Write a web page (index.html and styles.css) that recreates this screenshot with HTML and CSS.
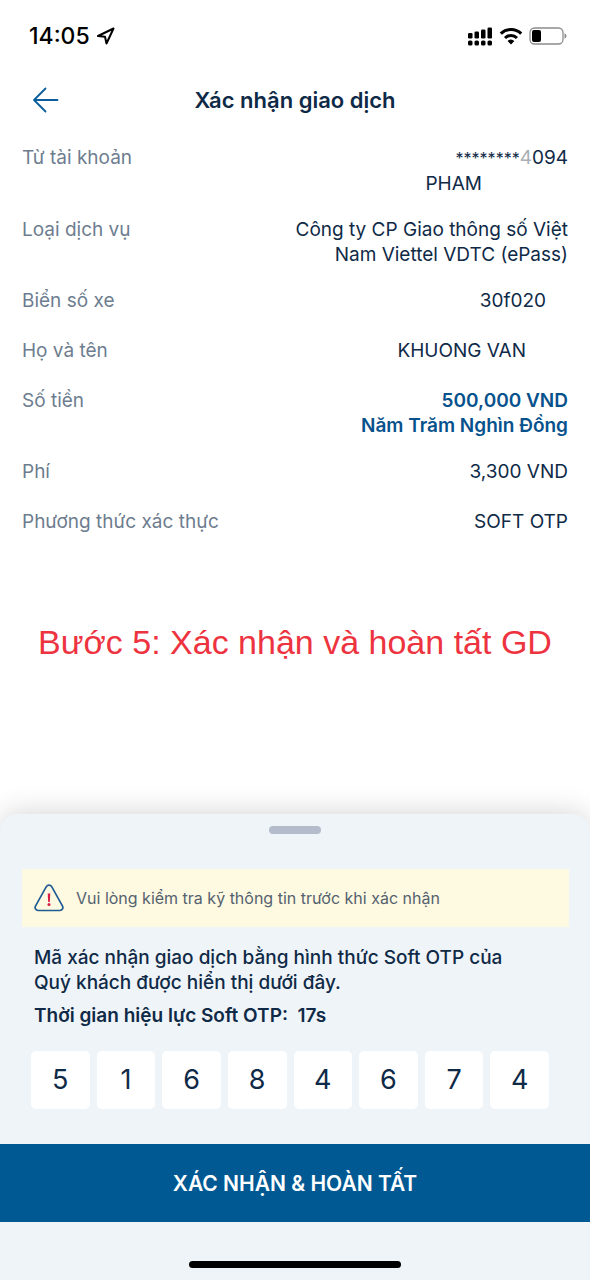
FILE: index.html
```html
<!DOCTYPE html>
<html lang="vi">
<head>
<meta charset="utf-8">
<meta name="viewport" content="width=device-width, initial-scale=1">
<title>Xác nhận giao dịch</title>
<link rel="stylesheet" href="styles.css">
</head>
<body>
<div class="screen">
  <div class="status">
    <span class="status-time">14:05</span>
    <svg class="status-location" width="20" height="20" viewBox="0 0 20 20" fill="none" stroke="#000" stroke-width="2" stroke-linejoin="round" aria-hidden="true"><path d="M17.500 2.500 2 10l7 .8 1.500 6.700z"/></svg>
    <div class="status-icons">
      <svg width="25" height="20" viewBox="0 0 25 20" aria-hidden="true"><g fill="#000"><rect x="0" y="7" width="4.500" height="5.500" rx="1.300"/><rect x="6.500" y="5.500" width="4.500" height="7" rx="1.300"/><rect x="13" y="3.500" width="4.500" height="9" rx="1.300"/><rect x="19.500" y="1.500" width="4.500" height="11" rx="1.300"/><rect x="0" y="14.500" width="4.500" height="5" rx="1.600"/><rect x="6.500" y="14.500" width="4.500" height="5" rx="1.600"/><rect x="13" y="14.500" width="4.500" height="5" rx="1.600"/><rect x="19.500" y="14.500" width="4.500" height="5" rx="1.600"/></g></svg>
      <svg width="24" height="18" viewBox="0 0 24 18" fill="none" stroke="#000" stroke-width="3" aria-hidden="true"><path d="M1.800 6.600a14.500 14.500 0 0 1 20.400 0"/><path d="M6 11a8.600 8.600 0 0 1 12 0"/><path d="M12 17.500 8.600 14a5 5 0 0 1 6.800 0z" fill="#000" stroke="none"/></svg>
      <svg width="38" height="18" viewBox="0 0 38 18" aria-hidden="true"><rect x="1" y="1" width="33" height="16" rx="4.500" fill="none" stroke="#8c8c8c" stroke-width="1.300"/><rect x="3" y="3" width="9" height="12" rx="2" fill="#000"/><path d="M35.500 6.300Q37.500 7 37.500 9T35.500 11.700z" fill="#8c8c8c"/></svg>
    </div>
  </div>

  <header class="header">
    <button class="back" type="button" aria-label="Quay lại">
      <svg width="28" height="26" viewBox="0 0 28 26" fill="none" stroke="#0b5e9b" stroke-width="1.800" stroke-linecap="round" stroke-linejoin="round" aria-hidden="true"><path d="M25.500 13H2M13.500 1.500 2 13l11.500 11.500"/></svg>
    </button>
    <h1 class="title">Xác nhận giao dịch</h1>
  </header>

  <dl class="details">
    <div class="row"><dt>Từ tài khoản</dt><dd><span class="mask">********</span><span class="faded">4</span>094<span class="line holder">PHAM</span></dd></div>
    <div class="row"><dt>Loại dịch vụ</dt><dd>Công ty CP Giao thông số Việt<br>Nam Viettel VDTC (ePass)</dd></div>
    <div class="row"><dt>Biển số xe</dt><dd class="plate">30f020</dd></div>
    <div class="row"><dt>Họ và tên</dt><dd class="owner">KHUONG VAN</dd></div>
    <div class="row"><dt>Số tiền</dt><dd class="amount">500,000 VND<span class="line">Năm Trăm Nghìn Đồng</span></dd></div>
    <div class="row"><dt>Phí</dt><dd>3,300 VND</dd></div>
    <div class="row"><dt>Phương thức xác thực</dt><dd>SOFT OTP</dd></div>
  </dl>

  <p class="step">Bước 5: Xác nhận và hoàn tất GD</p>

  <section class="sheet">
    <div class="handle"></div>
    <div class="notice">
      <svg width="30" height="28" viewBox="0 0 30 28" fill="none" aria-hidden="true"><path d="M12.300 2.600a3.200 3.200 0 0 1 5.400 0l10.700 19.200c1.200 2.200 0 4.700-2.600 4.700H4.200c-2.600 0-3.800-2.500-2.600-4.700z" stroke="#1f5c92" stroke-width="1.700"/><path d="M13.700 9.500h2.600l-.5 8.500h-1.600z" fill="#d81e48"/><circle cx="15" cy="20.500" r="1.500" fill="#d81e48"/></svg>
      <span>Vui lòng kiểm tra kỹ thông tin trước khi xác nhận</span>
    </div>
    <div class="info">
      <p>Mã xác nhận giao dịch bằng hình thức Soft OTP của<br>Quý khách được hiển thị dưới đây.</p>
      <p class="timer">Thời gian hiệu lực Soft OTP:&nbsp; 17s</p>
    </div>
    <div class="otp">
      <span>5</span><span>1</span><span>6</span><span>8</span><span>4</span><span>6</span><span>7</span><span>4</span>
    </div>
    <button class="confirm" type="button">XÁC NHẬN &amp; HOÀN TẤT</button>
    <div class="home"></div>
  </section>
</div>
</body>
</html>
```
FILE: styles.css
```css
* {
  box-sizing: border-box;
}

body {
  margin: 0;
  background: #fff;
  color: #0f2a47;
  font-family: Inter, "Open Sans", sans-serif;
  font-size: 19px;
  line-height: 25px;
}

p, h1, dl, dd {
  margin: 0;
}

button {
  border: 0;
  padding: 0;
  font-family: inherit;
  cursor: pointer;
}

.screen {
  display: flex;
  flex-direction: column;
  min-height: 100vh;
}

.status {
  display: flex;
  align-items: center;
  height: 72px;
  padding: 0 23px 0 29px;
  gap: 6px;
}

.status-time {
  color: #000;
  font-size: 23px;
  font-weight: 500;
}

.status-icons {
  display: flex;
  align-items: center;
  gap: 6px;
  margin-left: auto;
}

.header {
  display: grid;
  grid-template-columns: 28px 1fr 28px;
  align-items: center;
  height: 56px;
  padding: 0 32px;
}

.back {
  display: flex;
  background: none;
}

.title {
  font-size: 22px;
  font-weight: 600;
  text-align: center;
}

.details {
  display: flex;
  flex-direction: column;
  gap: 21px;
  padding: 17px 22px 0;
}

.row {
  display: flex;
  justify-content: space-between;
  gap: 16px;
  min-height: 29px;
}

.row dt {
  color: #6d7d8f;
}

.row dd {
  text-align: right;
}

.line {
  display: block;
}

.mask {
  font-size: 16px;
}

.faded {
  color: #a9afb6;
}

.holder {
  padding-right: 86px;
}

.row .plate {
  padding-right: 22px;
}

.row .owner {
  padding-right: 42px;
}

.row .amount {
  color: #07528d;
  font-weight: 600;
}

.step {
  margin: 80px 0 40px;
  color: #ee3340;
  font-family: "Liberation Sans", Arial, sans-serif;
  font-size: 34px;
  line-height: 48px;
  text-align: center;
}

.sheet {
  display: flex;
  flex-direction: column;
  margin-top: auto;
  padding-bottom: 12px;
  border-radius: 18px 18px 0 0;
  background: #eff4f8;
  box-shadow: 0 -2px 28px rgba(0, 0, 0, 0.16);
}

.handle {
  align-self: center;
  width: 52px;
  height: 8px;
  margin-top: 12px;
  border-radius: 4px;
  background: #b4bccb;
}

.notice {
  display: flex;
  align-items: center;
  gap: 12px;
  min-height: 58px;
  margin: 35px 21px 0 22px;
  padding: 0 12px;
  background: #fef9e1;
  color: #54626f;
  font-size: 16px;
}

.info {
  display: flex;
  flex-direction: column;
  gap: 8px;
  padding: 18px 34px 0;
  font-weight: 500;
}

.info .timer {
  font-weight: 600;
}

.otp {
  display: grid;
  grid-template-columns: repeat(8, 1fr);
  gap: 7px;
  margin: 23px 41px 0 31px;
}

.otp span {
  border-radius: 5px;
  background: #fff;
  font-size: 27px;
  line-height: 58px;
  text-align: center;
}

.confirm {
  height: 78px;
  margin-top: 35px;
  background: #005993;
  color: #fff;
  font-size: 21px;
  font-weight: 600;
}

.home {
  align-self: center;
  width: 36%;
  height: 7px;
  margin-top: 39px;
  border-radius: 4px;
  background: #000;
}
```
